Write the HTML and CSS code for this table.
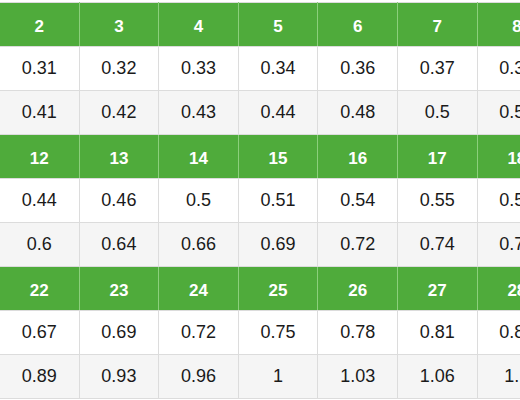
FILE: index.html
```html
<!DOCTYPE html>
<html>
<head>
<meta charset="utf-8">
<link rel="stylesheet" href="styles.css">
</head>
<body>
<div class="wrap">
<table class="grid">
<colgroup><col><col><col><col><col><col><col></colgroup>
<tbody>
<tr class="head"><th>2</th><th>3</th><th>4</th><th>5</th><th>6</th><th>7</th><th>8</th></tr>
<tr class="odd"><td>0.31</td><td>0.32</td><td>0.33</td><td>0.34</td><td>0.36</td><td>0.37</td><td>0.38</td></tr>
<tr class="even"><td>0.41</td><td>0.42</td><td>0.43</td><td>0.44</td><td>0.48</td><td>0.5</td><td>0.52</td></tr>
<tr class="head"><th>12</th><th>13</th><th>14</th><th>15</th><th>16</th><th>17</th><th>18</th></tr>
<tr class="odd"><td>0.44</td><td>0.46</td><td>0.5</td><td>0.51</td><td>0.54</td><td>0.55</td><td>0.57</td></tr>
<tr class="even"><td>0.6</td><td>0.64</td><td>0.66</td><td>0.69</td><td>0.72</td><td>0.74</td><td>0.77</td></tr>
<tr class="head"><th>22</th><th>23</th><th>24</th><th>25</th><th>26</th><th>27</th><th>28</th></tr>
<tr class="odd"><td>0.67</td><td>0.69</td><td>0.72</td><td>0.75</td><td>0.78</td><td>0.81</td><td>0.84</td></tr>
<tr class="even"><td>0.89</td><td>0.93</td><td>0.96</td><td>1</td><td>1.03</td><td>1.06</td><td>1.1</td></tr>
</tbody>
</table>
</div>
</body>
</html>
```

FILE: styles.css
```css
html, body {
  margin: 0;
  padding: 0;
  background: #ffffff;
  overflow: hidden;
}

.wrap {
  padding-top: 2px;
  margin-left: -1px;
  width: 600px;
}

.grid {
  border-collapse: collapse;
  table-layout: fixed;
  width: 557px;
  font-family: "Liberation Sans", Arial, sans-serif;
}

.grid col {
  width: 79.6px;
}

.grid th,
.grid td {
  height: 43px;
  padding: 0;
  text-align: center;
  vertical-align: middle;
  border: 1px solid #dcdcdc;
}

.grid td {
  font-size: 18px;
  color: #1a1a1a;
}

.grid th {
  font-size: 17px;
  font-weight: bold;
  color: #ffffff;
  background: #4fab3b;
  border-color: #dcdcdc #8ccf7c;
  padding-top: 4px;
  height: 39px;
}

.odd td {
  background: #ffffff;
}

.even td {
  background: #f5f5f5;
}
```
